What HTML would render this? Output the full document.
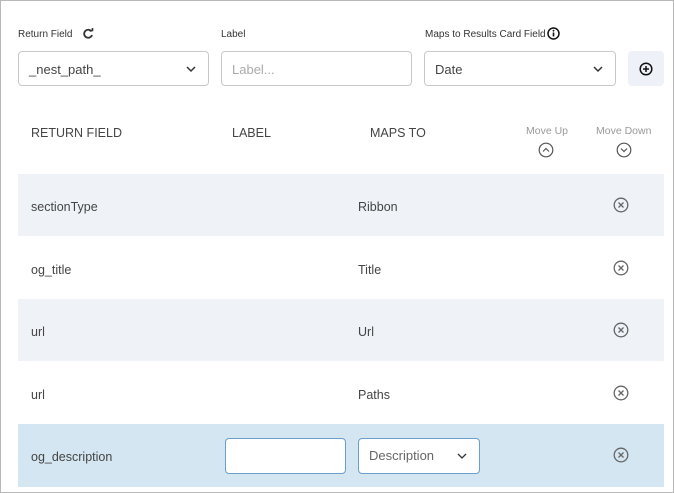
<!DOCTYPE html>
<html><head><style>
*{box-sizing:border-box;margin:0;padding:0}
body{width:674px;height:493px;background:#fff;font-family:"Liberation Sans",sans-serif;position:relative;overflow:hidden;color:#333}
.frame{position:absolute;left:0;top:0;width:674px;height:493px;border:1px solid #b8b8b8}
.a{position:absolute;white-space:nowrap}
.lbl{font-size:10px;color:#333;top:29px}
.box{position:absolute;border:1px solid #c9c9c9;border-radius:4px;background:#fff;font-size:13px;color:#444;padding-left:10px;line-height:35px}
.chev{position:absolute;right:12px;top:13px}
.hd{font-size:12.5px;color:#444;top:126px}
.mv{font-size:10.5px;color:#999;top:125px}
.row{position:absolute;left:18px;width:646px;height:62px}
.row .t{position:absolute;font-size:12.5px;color:#444;top:26px}
.x{position:absolute;left:595px;top:23px}
</style></head><body>
<div class="frame"></div>
<div class="a lbl" style="left:18px">Return Field</div>
<svg class="a" style="left:82px;top:28px" width="12" height="12" viewBox="0 0 12 12"><path d="M9.5 3.5A4 4 0 1 0 10 7" fill="none" stroke="#333" stroke-width="1.8"/><path d="M7 2.5h3.5V-1" fill="none" stroke="#333" stroke-width="1.6"/></svg>
<div class="a lbl" style="left:425px">Maps to Results Card Field</div>
<div class="a lbl" style="left:221px">Label</div>
<svg class="a" style="left:547px;top:27px" width="13" height="13" viewBox="0 0 13 13"><circle cx="6.5" cy="6.5" r="5.5" fill="none" stroke="#111" stroke-width="1.5"/><path d="M6.5 5.5v4" stroke="#111" stroke-width="1.6"/><circle cx="6.5" cy="3.7" r=".9" fill="#111"/></svg>
<div class="box" style="left:18px;top:51px;width:191px;height:35px">_nest_path_<svg class="chev" width="10" height="8"><path d="M1 2l4 4 4-4" fill="none" stroke="#333" stroke-width="1.5"/></svg></div>
<div class="box" style="left:221px;top:51px;width:191px;height:35px;color:#aaa">Label...</div>
<div class="box" style="left:424px;top:51px;width:192px;height:35px">Date<svg class="chev" width="10" height="8"><path d="M1 2l4 4 4-4" fill="none" stroke="#333" stroke-width="1.5"/></svg></div>
<div class="a" style="left:628px;top:51px;width:36px;height:35px;background:#eef2f8;border-radius:4px"></div>
<svg class="a" style="left:639px;top:62px" width="14" height="14" viewBox="0 0 14 14"><circle cx="7" cy="7" r="5.8" fill="none" stroke="#111" stroke-width="1.5"/><path d="M7 4v6M4 7h6" stroke="#111" stroke-width="1.5"/></svg>
<div class="a hd" style="left:31px">RETURN FIELD</div>
<div class="a hd" style="left:232px">LABEL</div>
<div class="a hd" style="left:370px">MAPS TO</div>
<div class="a mv" style="left:526px">Move Up</div>
<div class="a mv" style="left:596px">Move Down</div>
<svg class="a" style="left:538px;top:142px" width="16" height="16" viewBox="0 0 16 16"><circle cx="8" cy="8" r="6.8" fill="none" stroke="#555" stroke-width="1.2"/><path d="M5 9.5l3-3 3 3" fill="none" stroke="#555" stroke-width="1.2"/></svg>
<svg class="a" style="left:616px;top:142px" width="16" height="16" viewBox="0 0 16 16"><circle cx="8" cy="8" r="6.8" fill="none" stroke="#555" stroke-width="1.2"/><path d="M5 6.5l3 3 3-3" fill="none" stroke="#555" stroke-width="1.2"/></svg>

<div class="row" style="top:174px;background:#eff3f8"><div class="t" style="left:13px">sectionType</div><div class="t" style="left:340px">Ribbon</div><svg class="x" width="16" height="16" viewBox="0 0 16 16"><circle cx="8" cy="8" r="6.8" fill="none" stroke="#666" stroke-width="1.3"/><path d="M5.5 5.5l5 5M10.5 5.5l-5 5" stroke="#666" stroke-width="1.3"/></svg></div>
<div class="row" style="top:237px"><div class="t" style="left:13px">og_title</div><div class="t" style="left:340px">Title</div><svg class="x" width="16" height="16" viewBox="0 0 16 16"><circle cx="8" cy="8" r="6.8" fill="none" stroke="#666" stroke-width="1.3"/><path d="M5.5 5.5l5 5M10.5 5.5l-5 5" stroke="#666" stroke-width="1.3"/></svg></div>
<div class="row" style="top:299px;background:#eff3f8"><div class="t" style="left:13px">url</div><div class="t" style="left:340px">Url</div><svg class="x" width="16" height="16" viewBox="0 0 16 16"><circle cx="8" cy="8" r="6.8" fill="none" stroke="#666" stroke-width="1.3"/><path d="M5.5 5.5l5 5M10.5 5.5l-5 5" stroke="#666" stroke-width="1.3"/></svg></div>
<div class="row" style="top:362px"><div class="t" style="left:13px">url</div><div class="t" style="left:340px">Paths</div><svg class="x" width="16" height="16" viewBox="0 0 16 16"><circle cx="8" cy="8" r="6.8" fill="none" stroke="#666" stroke-width="1.3"/><path d="M5.5 5.5l5 5M10.5 5.5l-5 5" stroke="#666" stroke-width="1.3"/></svg></div>
<div class="row" style="top:424px;height:63px;background:#d4e6f2"><div class="t" style="left:13px;top:26px">og_description</div>
<div class="box" style="left:207px;top:14px;width:121px;height:36px;border-color:#6a9fd0"></div>
<div class="box" style="left:340px;top:14px;width:122px;height:36px;border-color:#6a9fd0;color:#666;line-height:34px">Description<svg class="chev" style="top:13px" width="10" height="8"><path d="M1 2l4 4 4-4" fill="none" stroke="#333" stroke-width="1.3"/></svg></div>
<svg class="x" style="top:23px" width="16" height="16" viewBox="0 0 16 16"><circle cx="8" cy="8" r="6.8" fill="none" stroke="#666" stroke-width="1.3"/><path d="M5.5 5.5l5 5M10.5 5.5l-5 5" stroke="#666" stroke-width="1.3"/></svg></div>
</body></html>
